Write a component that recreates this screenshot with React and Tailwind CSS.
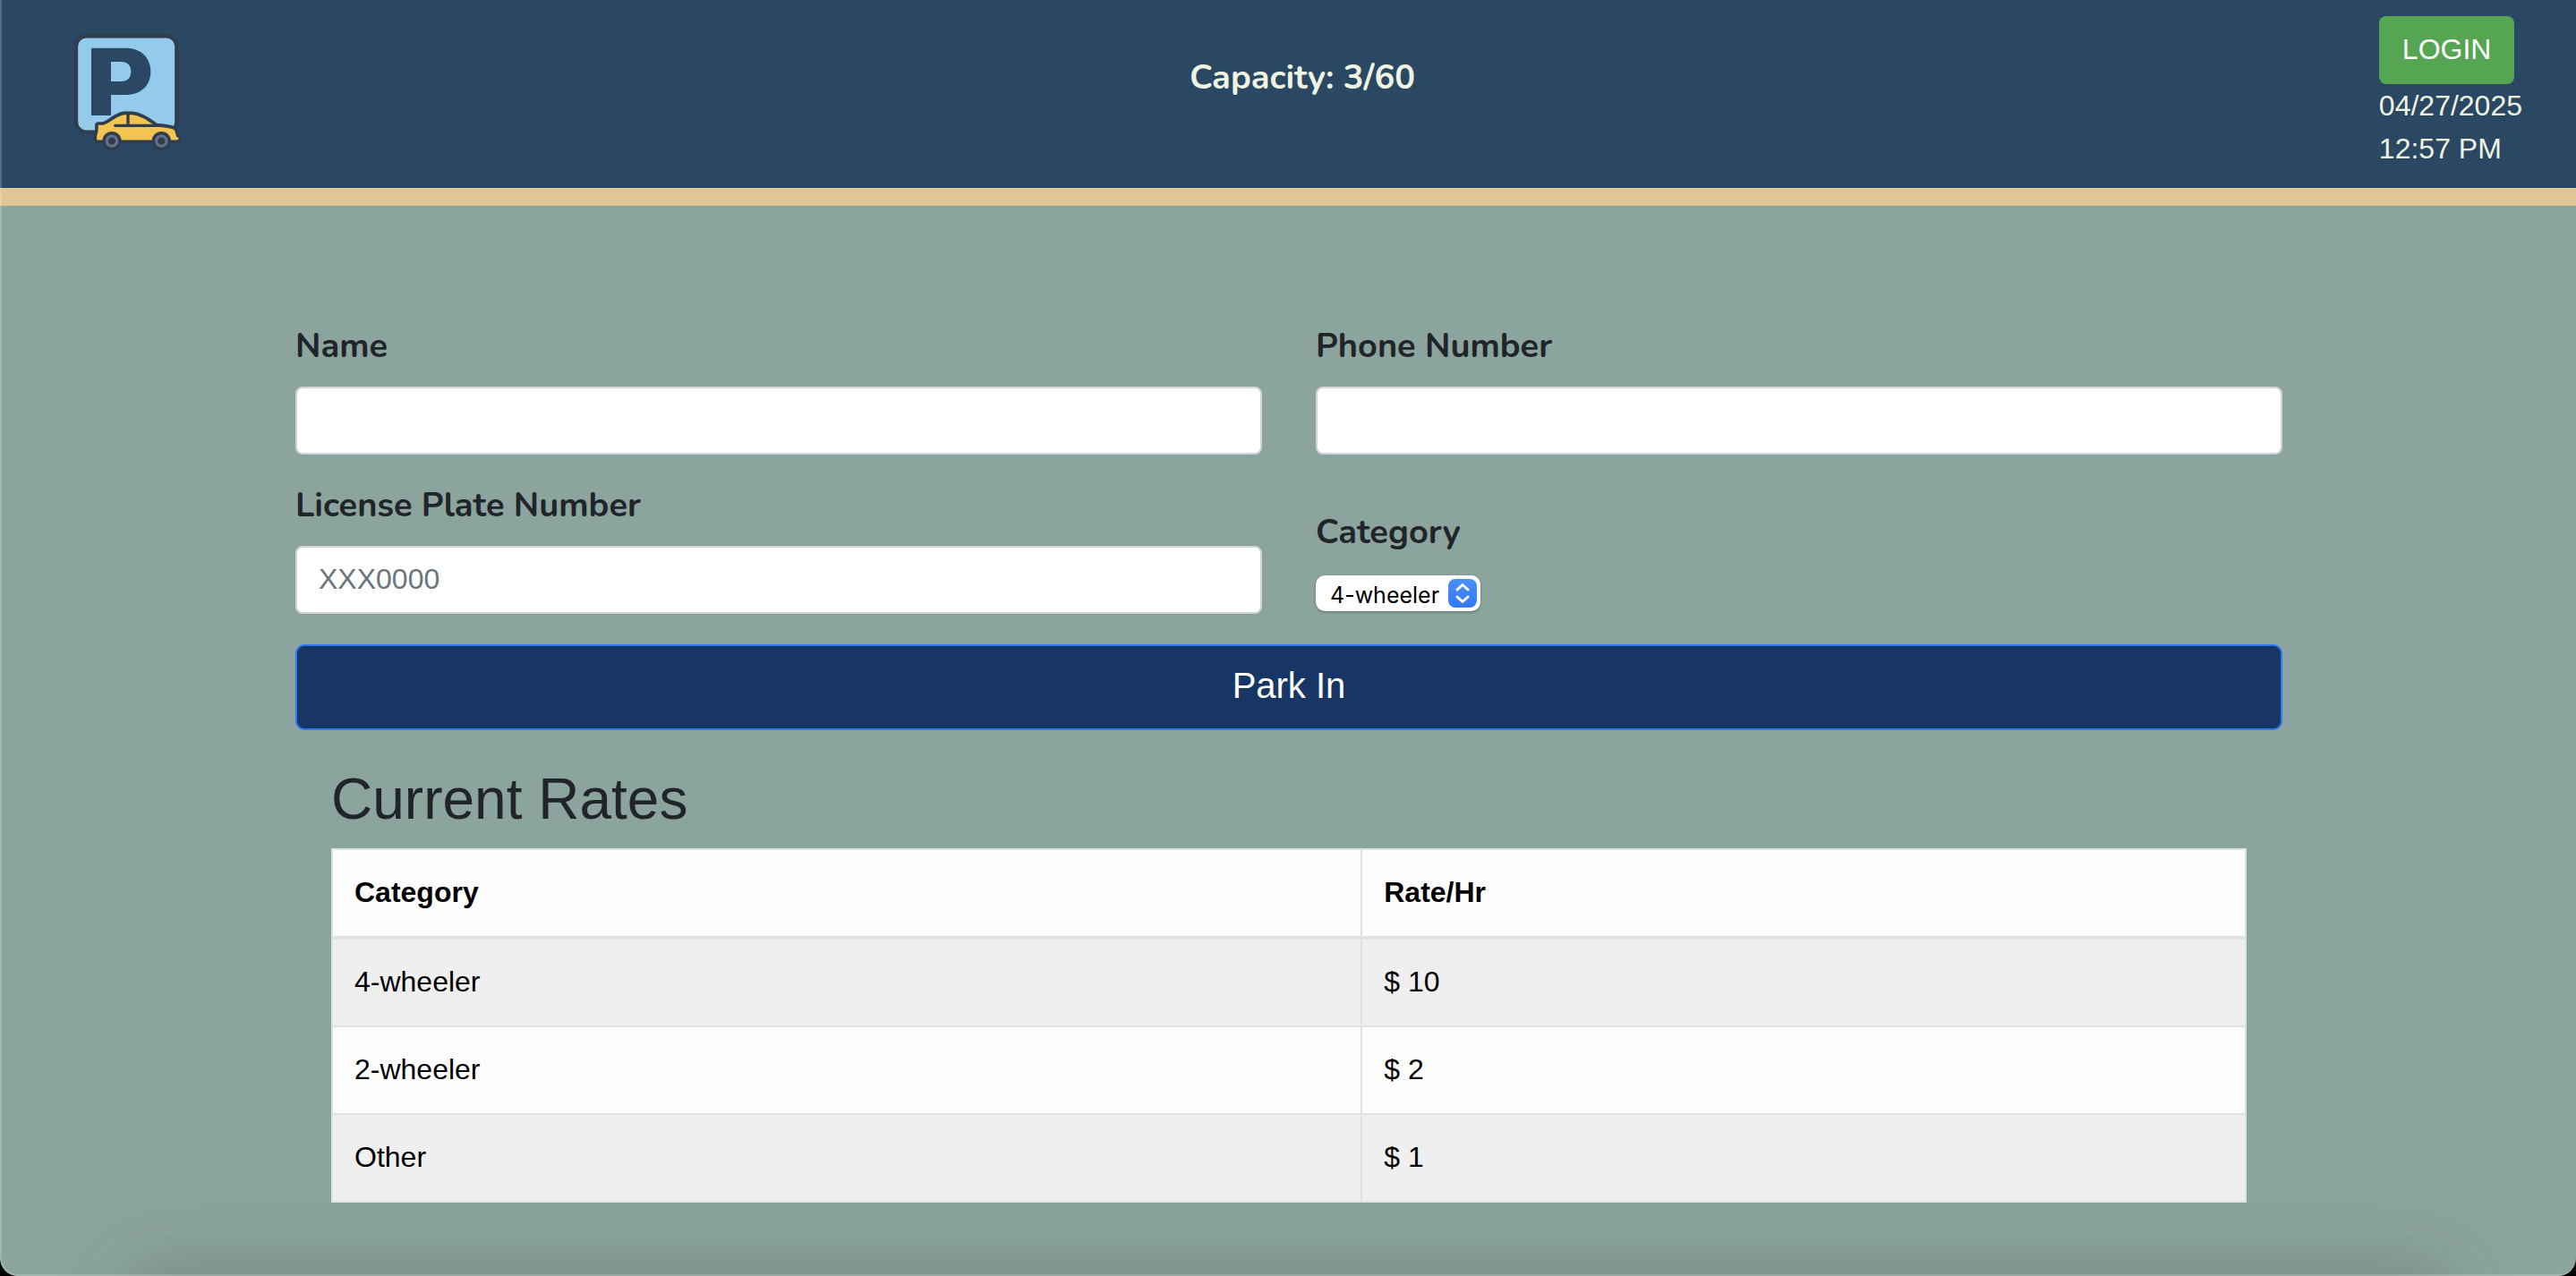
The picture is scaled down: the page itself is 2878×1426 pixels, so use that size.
import React from "react";

const rates = [
  { category: "4-wheeler", rate: "$ 10" },
  { category: "2-wheeler", rate: "$ 2" },
  { category: "Other", rate: "$ 1" },
];

const labelClass =
  "mb-4 block font-['Nunito','Lato',sans-serif] text-[38px] leading-[58px] font-bold";
const inputClass =
  "block h-[76px] w-full rounded-lg border-2 border-[#ced4da] bg-white px-6 pb-0.5 text-[32px] leading-[48px] text-[#495057] placeholder:text-[#6c757d]";

function Logo() {
  return (
    <svg viewBox="0 0 480 480" className="h-40 w-40" role="img" aria-label="Parking">
      <rect x="75" y="61" width="337" height="322" rx="34" fill="#94caea" stroke="#2f3d4e" strokeWidth="13" />
      <path
        fillRule="evenodd"
        fill="#2a4763"
        d="M126 101H240C292 101 325 132 325 180C325 228 292 258 240 258H192V327H126ZM192 147V213H226C247 213 259 200 259 180C259 159 247 147 226 147Z"
      />
      <path
        d="M144 357Q145 354 150 354H165C190 348 202 324 235 319H262C292 321 318 340 345 359C372 362 398 363 407 371C414 379 414 389 416 395L424 399V407L417 415H142L139 407V395L143 381Z"
        fill="#f4c453"
        stroke="#2f3d4e"
        strokeWidth="11"
        strokeLinejoin="round"
      />
      <path d="M206 361H366M249 322V358" fill="none" stroke="#2f3d4e" strokeWidth="10" strokeLinecap="round" />
      <circle cx="195" cy="413" r="32" fill="#2f3d4e" />
      <circle cx="195" cy="413" r="17" fill="none" stroke="#657287" strokeWidth="9" />
      <circle cx="361" cy="413" r="32" fill="#2f3d4e" />
      <circle cx="361" cy="413" r="17" fill="none" stroke="#657287" strokeWidth="9" />
    </svg>
  );
}

function Header() {
  return (
    <header className="grid grid-cols-[1fr_auto_1fr] items-start border-b-[20px] border-[#e2c594] bg-[#2a4763] text-[#eef4e1]">
      <div className="pt-5 pl-[60px]">
        <Logo />
      </div>
      <p className="pt-[58px] pl-8 font-['Nunito','Lato',sans-serif] text-[38px] leading-[58px] font-bold">
        Capacity: 3/60
      </p>
      <div className="justify-self-end pt-[18px] pr-[60px] pb-5 text-[32px] leading-[48px]">
        <button type="button" className="block h-[76px] rounded-lg bg-[#55a552] px-[26px] pb-0.5 text-white">
          LOGIN
        </button>
        <p>04/27/2025</p>
        <p>12:57 PM</p>
      </div>
    </header>
  );
}

function CategorySelect() {
  return (
    <div className="relative mt-[3px] inline-block">
      <select
        id="category"
        className="block h-10 w-[184px] appearance-none rounded-[10px] bg-white pt-[3px] pl-4 font-['Inter',sans-serif] text-[25px] leading-9 text-black shadow-[0_1px_3px_rgba(0,0,0,0.35)]"
      >
        <option>4-wheeler</option>
        <option>2-wheeler</option>
        <option>Other</option>
      </select>
      <span className="pointer-events-none absolute top-1 right-1 flex h-8 w-8 items-center justify-center rounded-lg bg-linear-to-b from-[#4a90f8] to-[#3478f6]">
        <svg viewBox="0 0 32 32" className="h-8 w-8" fill="none" stroke="white" strokeWidth="3" strokeLinecap="round" strokeLinejoin="round" aria-hidden="true">
          <path d="M10 12L16 6.500L22 12M10 20L16 25.500L22 20" />
        </svg>
      </span>
    </div>
  );
}

function ParkForm() {
  return (
    <form>
      <div className="grid grid-cols-2 gap-x-[60px] gap-y-7">
        <div>
          <label htmlFor="name" className={labelClass}>Name</label>
          <input id="name" type="text" className={inputClass} />
        </div>
        <div>
          <label htmlFor="phone" className={labelClass}>Phone Number</label>
          <input id="phone" type="text" className={inputClass} />
        </div>
        <div>
          <label htmlFor="plate" className={labelClass}>License Plate Number</label>
          <input id="plate" type="text" placeholder="XXX0000" className={inputClass} />
        </div>
        <div className="pt-[30px]">
          <label htmlFor="category" className={labelClass}>Category</label>
          <CategorySelect />
        </div>
      </div>
      <button
        type="button"
        className="mt-[34px] block h-24 w-full rounded-[10px] border-2 border-[#3478f6] bg-[#183665] pb-1 text-[40px] leading-[60px] text-white"
      >
        Park In
      </button>
    </form>
  );
}

function RatesTable() {
  return (
    <section className="px-10 pt-[39px]">
      <h2 className="mb-4 text-[64px] leading-[77px]">Current Rates</h2>
      <table className="w-full border-collapse border-2 border-[#dee2e6] bg-[#fdfdfd] text-left text-[32px] leading-[48px] text-black">
        <thead>
          <tr className="border-b-4 border-[#dee2e6]">
            <th className="w-[53.8%] border-r-2 border-[#dee2e6] px-6 pt-[23px] pb-[25px] font-bold">Category</th>
            <th className="px-6 pt-[23px] pb-[25px] font-bold">Rate/Hr</th>
          </tr>
        </thead>
        <tbody>
          {rates.map((row) => (
            <tr key={row.category} className="border-b-2 border-[#dee2e6] odd:bg-[#efefef]">
              <td className="border-r-2 border-[#dee2e6] px-6 pt-[23px] pb-[25px]">{row.category}</td>
              <td className="px-6 pt-[23px] pb-[25px]">{row.rate}</td>
            </tr>
          ))}
        </tbody>
      </table>
    </section>
  );
}

export default function App() {
  return (
    <div className="min-h-screen bg-black">
      <div className="relative min-h-screen overflow-hidden rounded-b-[20px] bg-[#8ba49d] font-['Helvetica_Neue','Liberation_Sans',sans-serif] text-[#212529]">
        <Header />
        <div className="pl-0.5">
          <main className="mx-auto w-[77.19%] pt-32 pb-20">
            <ParkForm />
            <RatesTable />
          </main>
        </div>
        <div className="pointer-events-none absolute inset-x-[140px] -bottom-20 h-20 rounded-[40px] shadow-[0_0_80px_0_rgba(70,85,70,0.4)]" />
        <div className="pointer-events-none absolute inset-0 rounded-b-[20px] border-b-2 border-l-2 border-white/20" />
      </div>
    </div>
  );
}
